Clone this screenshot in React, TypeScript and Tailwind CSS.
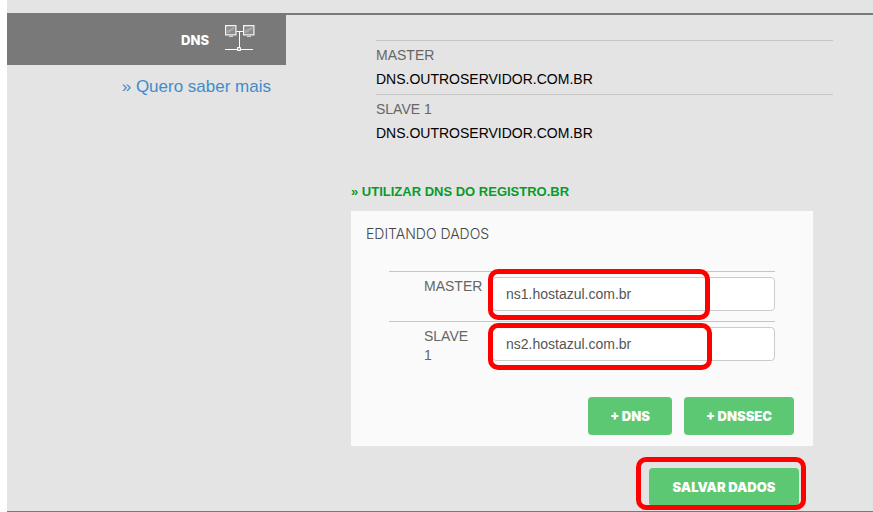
import { useState } from "react";

const servers = [
  { label: "MASTER", host: "DNS.OUTROSERVIDOR.COM.BR" },
  { label: "SLAVE 1", host: "DNS.OUTROSERVIDOR.COM.BR" },
];

const NetworkIcon = () => (
  <svg
    width="30"
    height="30"
    viewBox="0 0 30 30"
    fill="none"
    aria-hidden="true"
  >
    <path d="M0.6 0.6h10.3v9.2h-10.3zM18.6 0.6h10.3v9.2h-10.3z" fill="#8c8c8c" stroke="#f4f4f4" strokeWidth="1.2" />
    <path d="M2 8V5.5L8.5 2H9.5V4L3.5 8zM20 8V5.5L26.5 2H27.5V4L21.5 8z" fill="#a6a6a6" />
    <path d="M4 11.5h4M22 11.5h4" stroke="#d4d4d4" />
    <path d="M11.5 6.5h7M14.5 6.5v16M0 24.5h28" stroke="#ffffff" />
    <path d="M12.5 22.5h3v3h-3z" fill="#a0a0a0" stroke="#ffffff" />
  </svg>
);

const Sidebar = () => (
  <aside className="w-[279px] shrink-0 text-right">
    <h2 className="flex h-[50px] items-center justify-end gap-4 bg-[#797979] pr-[31px] font-['Inter',sans-serif] text-[13px] font-extrabold text-white">
      DNS
      <NetworkIcon />
    </h2>
    <a href="#mais" className="mt-3 mr-[15px] inline-block text-[17px] leading-5 text-[#428bca]">
      » Quero saber mais
    </a>
  </aside>
);

const buttonStyle =
  "h-[38px] rounded bg-[#5cc873] font-['Inter',sans-serif] text-[13px] font-black text-white";

const App = () => {
  const [master, setMaster] = useState("ns1.hostazul.com.br");
  const [slave, setSlave] = useState("ns2.hostazul.com.br");

  const inputStyle =
    "h-[34px] w-full rounded border border-[#cccccc] bg-white px-[13px] text-sm text-[#555555]";
  const markStyle =
    "pointer-events-none absolute rounded-[10px] border-[5px] border-[#ff0000]";

  return (
    <div className="flex min-h-screen bg-white pl-[7px] font-['Liberation_Sans',sans-serif] text-sm leading-6">
      <div className="flex grow flex-col border-b border-[#797979] bg-[#e4e4e4] pt-[13px]">
        <div className="flex grow border-t-2 border-[#797979]">
          <Sidebar />

          <main className="grow pt-[25px] pl-[65px]">
            <dl className="mr-10 ml-[25px]">
              {servers.map((server) => (
                <div key={server.label} className="border-t border-[#c6c6c6] pt-0.5 pb-[3px]">
                  <dt className="text-[#666666]">{server.label}</dt>
                  <dd className="text-black">{server.host}</dd>
                </div>
              ))}
            </dl>

            <a
              href="#registro"
              className="mt-[34px] inline-block text-[13px] leading-5 font-bold text-[#089b2b]"
            >
              » UTILIZAR DNS DO REGISTRO.BR
            </a>

            <form className="mr-[60px]" onSubmit={(e) => e.preventDefault()}>
              <section className="mt-2 bg-[#fafafa] pt-[11px] pb-[11px]">
                <h3 className="pl-[15px] font-['Inter',sans-serif] text-sm leading-6 font-light text-[#444444]">
                  EDITANDO DADOS
                </h3>

                <div className="mt-[25px] mr-[38px] ml-[38px]">
                  <div className="flex h-[50px] border-t border-[#c6c6c6] pt-[5px] pl-[35px]">
                    <label htmlFor="master" className="w-[68px] shrink-0 leading-[19px] text-[#666666]">
                      MASTER
                    </label>
                    <div className="relative grow">
                      <input
                        id="master"
                        className={inputStyle}
                        value={master}
                        onChange={(e) => setMaster(e.target.value)}
                      />
                      <span className={`${markStyle} -top-2 -left-1 h-[51px] w-[222px]`} />
                    </div>
                  </div>
                  <div className="flex h-[50px] border-t border-[#c6c6c6] pt-[5px] pl-[35px]">
                    <label htmlFor="slave" className="w-[68px] shrink-0 pr-4 leading-[19px] text-[#666666]">
                      SLAVE 1
                    </label>
                    <div className="relative grow">
                      <input
                        id="slave"
                        className={inputStyle}
                        value={slave}
                        onChange={(e) => setSlave(e.target.value)}
                      />
                      <span className={`${markStyle} -top-1 -left-1 h-[47px] w-[224px]`} />
                    </div>
                  </div>
                </div>

                <div className="mt-[26px] mr-[19px] flex justify-end gap-3">
                  <button type="button" className={`${buttonStyle} w-[84px]`}>
                    + DNS
                  </button>
                  <button type="button" className={`${buttonStyle} w-[110px]`}>
                    + DNSSEC
                  </button>
                </div>
              </section>

              <div className="mt-[22px] mr-3.5 flex justify-end">
                <div className="relative">
                  <button type="submit" className={`${buttonStyle} block w-[150px]`}>
                    SALVAR DADOS
                  </button>
                  <span className={`${markStyle} -top-[11px] -left-[13px] h-[53px] w-[170px]`} />
                </div>
              </div>
            </form>
          </main>
        </div>
      </div>
    </div>
  );
};

export default App;
